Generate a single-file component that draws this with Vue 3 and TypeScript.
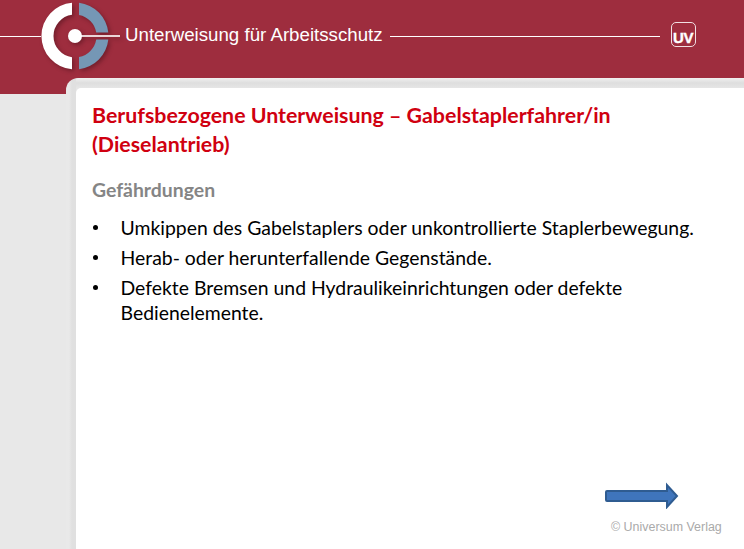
<script setup lang="ts">
const items: string[] = [
  'Umkippen des Gabelstaplers oder unkontrollierte Staplerbewegung.',
  'Herab- oder herunterfallende Gegenstände.',
  'Defekte Bremsen und Hydraulikeinrichtungen oder defekte Bedienelemente.',
]
</script>

<template>
  <div class="page">
    <header class="header">
      <span class="rule rule-left"></span>
      <svg class="logo" width="79" height="72" viewBox="0 0 79 72">
        <path d="M31 2.630 A33.500 33.500 0 0 0 31 69.370 L31 57.290 A21.500 21.500 0 0 1 31 14.710 Z" fill="#fff" />
        <path d="M38 2.740 A33.500 33.500 0 0 1 67.320 32.500 L55.210 32.500 A21.500 21.500 0 0 0 38 14.880 Z" fill="#7597B5" />
        <path d="M38 69.260 A33.500 33.500 0 0 0 67.320 39.500 L55.210 39.500 A21.500 21.500 0 0 1 38 57.120 Z" fill="#7597B5" />
        <rect x="34" y="35.200" width="45" height="1.600" fill="#fff" />
        <circle cx="34" cy="36" r="7" fill="#fff" />
      </svg>
      <span class="title">Unterweisung für Arbeitsschutz</span>
      <span class="rule rule-right"></span>
      <span class="uv"><span>UV</span></span>
    </header>
    <main class="body">
      <section class="card">
        <div class="inner">
          <h1>Berufsbezogene Unterweisung – Gabelstaplerfahrer/in (Dieselantrieb)</h1>
          <h2>Gefährdungen</h2>
          <ul>
            <li v-for="item in items" :key="item">{{ item }}</li>
          </ul>
          <div class="foot">
            <svg class="arrow" width="76" height="27" viewBox="0 0 76 27">
              <path d="M3 9 H63 V3 L73 14 L63 25 V19 H3 Q2 19 2 18 V10 Q2 9 3 9 Z" fill="#3F75BC" stroke="#2F5C91" stroke-width="2" />
            </svg>
            <span class="copy">© Universum Verlag</span>
          </div>
        </div>
      </section>
    </main>
  </div>
</template>

<style>
html, body { margin: 0; padding: 0; background: #fff; }
</style>

<style scoped>
.page { width: 744px; height: 549px; position: relative; overflow: hidden; background: #e8e8e8; font-family: "Lato", "Open Sans", sans-serif; }
.header { height: 94px; background: #9E2D3E; display: flex; align-items: flex-start; }
.rule { height: 1.500px; background: #fff; margin-top: 35.500px; display: block; }
.rule-left { width: 41px; }
.logo { display: block; flex: none; filter: drop-shadow(2px 2px 2px rgba(60, 10, 20, .45)); }
.title { font-family: "Liberation Sans", Arial, sans-serif; font-size: 18.700px; color: #fff; margin-left: 5px; margin-top: 25px; line-height: 20px; white-space: nowrap; }
.rule-right { width: 270px; margin-left: 7px; }
.uv { width: 25px; height: 25px; margin-left: 11px; margin-top: 22px; box-sizing: border-box; border: 1.500px solid #f1dfe2; border-radius: 5px; display: flex; align-items: flex-end; justify-content: center; }
.uv span { font-family: "Liberation Sans", Arial, sans-serif; font-size: 15px; font-weight: 700; color: #fff; line-height: 17px; letter-spacing: -.4px; -webkit-text-stroke: .4px #fff; }
.body { position: absolute; left: 66px; top: 78px; right: 0; bottom: 0; }
.card { height: 100%; box-sizing: border-box; background: linear-gradient(90deg, #e9e9e9 0, #e9e9e9 3px, #e0e0e0 6px, #e0e0e0 10px, transparent 10px), linear-gradient(180deg, #f0f0f0 0, #dedede 5px, #e6e6e6 10px); border-radius: 12px 0 0 0; padding: 10px 0 0 10px; }
.inner { height: 100%; box-sizing: border-box; background: #fff; border-radius: 5px 0 0 0; padding: 13px 0 0 16px; position: relative; }
h1 { margin: 0; width: 640px; font-size: 21.350px; line-height: 28.500px; font-weight: 700; color: #D00010; }
h2 { margin: 21px 0 0; font-size: 19.400px; line-height: 22px; font-weight: 700; color: #858585; }
ul { list-style: none; margin: 14px 0 0; padding: 0; width: 640px; }
li { position: relative; padding-left: 28.500px; font-size: 19.400px; line-height: 25px; color: #000; margin-bottom: 5px; }
li::before { content: ""; position: absolute; left: 1px; top: 10px; width: 5px; height: 5px; border-radius: 50%; background: #000; }
.foot { position: absolute; right: 0; bottom: 0; width: 140px; height: 70px; }
.arrow { position: absolute; left: 0; top: 3px; display: block; }
.copy { position: absolute; left: 7px; top: 41px; font-family: "Liberation Sans", Arial, sans-serif; font-size: 12.450px; color: #aaaaaa; white-space: nowrap; }
</style>
